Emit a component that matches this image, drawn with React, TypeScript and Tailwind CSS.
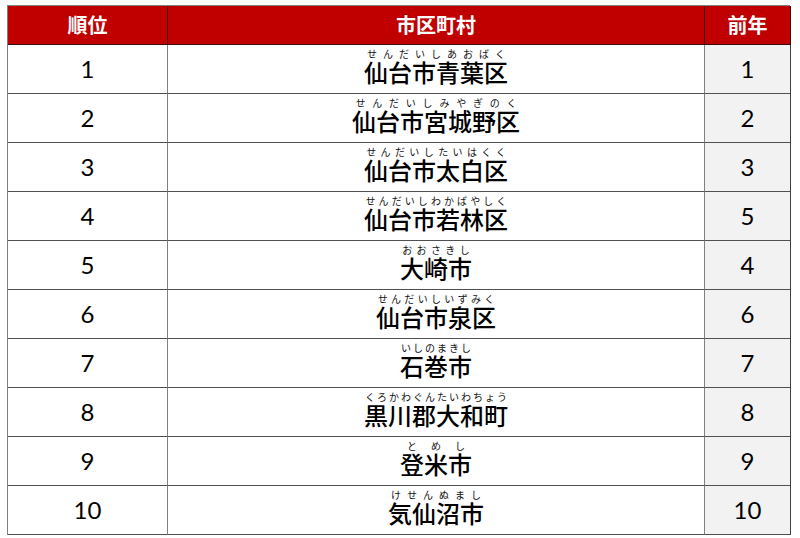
const rows = [
  { rank: 1, name: "仙台市青葉区", kana: "せんだいしあおばく", prev: 1 },
  { rank: 2, name: "仙台市宮城野区", kana: "せんだいしみやぎのく", prev: 2 },
  { rank: 3, name: "仙台市太白区", kana: "せんだいしたいはくく", prev: 3 },
  { rank: 4, name: "仙台市若林区", kana: "せんだいしわかばやしく", prev: 5 },
  { rank: 5, name: "大崎市", kana: "おおさきし", prev: 4 },
  { rank: 6, name: "仙台市泉区", kana: "せんだいしいずみく", prev: 6 },
  { rank: 7, name: "石巻市", kana: "いしのまきし", prev: 7 },
  { rank: 8, name: "黒川郡大和町", kana: "くろかわぐんたいわちょう", prev: 8 },
  { rank: 9, name: "登米市", kana: "とめし", prev: 9 },
  { rank: 10, name: "気仙沼市", kana: "けせんぬまし", prev: 10 },
]

const jp = "font-['Noto_Sans_CJK_JP',sans-serif]"
const num = "font-['Lato','Liberation_Sans',sans-serif] text-[24px] text-black"

function Name({ name, kana }: { name: string; kana: string }) {
  return (
    <div className={`inline-flex flex-col ${jp}`}>
      <div className="flex h-[11px] justify-around text-[10px] leading-[11px] text-[#111]">
        {Array.from(kana).map((c, i) => (
          <span key={i}>{c}</span>
        ))}
      </div>
      <div className="mt-[1px] text-[24px] font-medium leading-[24px] text-black">{name}</div>
    </div>
  )
}

export default function App() {
  return (
    <div className="h-[538px] w-[800px] bg-white pl-[7px] pt-[5px]">
      <div className="w-[783px] border-l border-t border-[#808080]">
        <div className={`grid h-[39px] grid-cols-[160px_537px_86px] bg-[#c00000] text-[20px] font-bold text-white ${jp}`}>
          <div className="flex items-center justify-center border-b border-r border-[#3a0a0a]">順位</div>
          <div className="flex items-center justify-center border-b border-r border-[#3a0a0a]">市区町村</div>
          <div className="flex items-center justify-center border-b border-r border-[#3a0a0a]">前年</div>
        </div>
        {rows.map((r) => (
          <div key={r.rank} className="grid h-[49px] grid-cols-[160px_537px_86px]">
            <div className={`flex items-center justify-center border-b border-r border-b-[#505050] border-r-[#808080] ${num}`}>
              {r.rank}
            </div>
            <div className="flex justify-center border-b border-r border-b-[#505050] border-r-[#808080] pt-[3px]">
              <Name name={r.name} kana={r.kana} />
            </div>
            <div className={`flex items-center justify-center border-b border-r border-b-[#505050] border-r-[#404040] bg-[#f2f2f2] ${num}`}>
              {r.prev}
            </div>
          </div>
        ))}
      </div>
    </div>
  )
}
